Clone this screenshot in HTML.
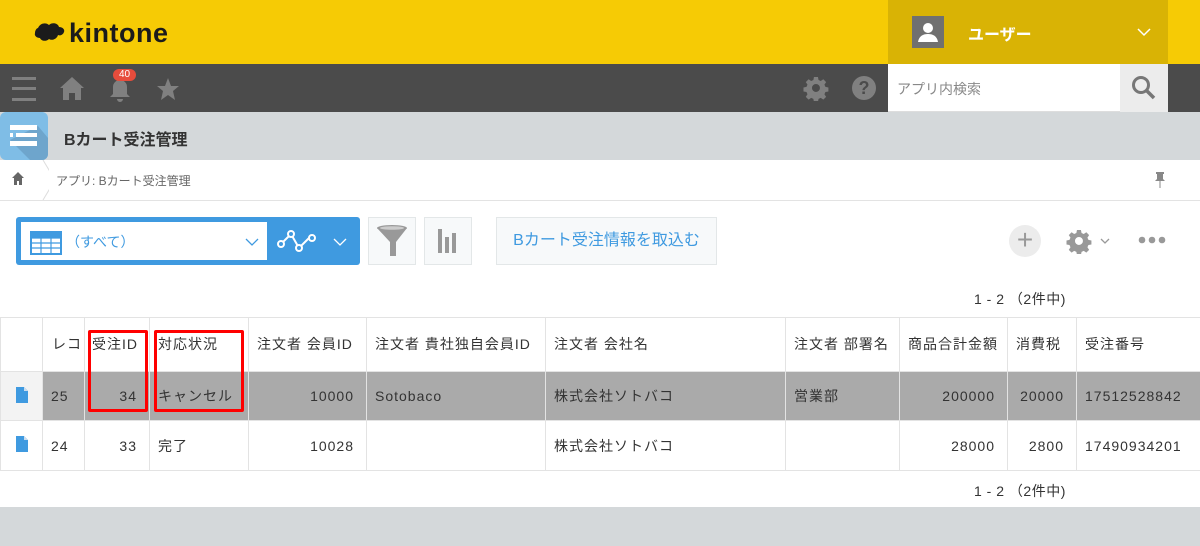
<!DOCTYPE html><html><head><meta charset="utf-8"><style>
*{box-sizing:border-box;margin:0;padding:0}
body{width:1200px;height:546px;overflow:hidden;background:#fff;font-family:"Liberation Sans","Noto Sans CJK JP",sans-serif;color:#333;position:relative}
.a{position:absolute}
td{border:1px solid #e3e3e3;font-size:14px;padding:0 8px;white-space:nowrap;overflow:hidden;letter-spacing:1px}
td.r{text-align:right;padding-right:12px}
</style></head><body>
<div class="a" style="left:0;top:0;width:1200px;height:64px;background:#f6cb05"></div>
<svg class="a" style="left:34px;top:20px" width="32" height="24" viewBox="0 0 32 24"><path d="M4 8c2-5 8-6 11-3 3-3 9-2 10 2 4 0 6 3 5 5-1 3-4 4-6 3-1 4-6 6-9 4-3 3-8 2-9-1-3 0-6-2-5-5 0-3 2-5 3-5z" fill="#1b1b1b"/></svg>
<div class="a" style="left:69px;top:18px;font-size:27px;font-weight:bold;color:#1b1b1b;letter-spacing:0.5px">kintone</div>
<div class="a" style="left:888px;top:0;width:280px;height:64px;background:#d9b305"></div>
<div class="a" style="left:912px;top:16px;width:32px;height:32px;background:#707070"><svg width="32" height="32"><circle cx="16" cy="12" r="5" fill="#fff"/><path d="M6 26c1-6 5-8 10-8s9 2 10 8z" fill="#fff"/></svg></div>
<div class="a" style="left:968px;top:21px;font-size:16px;font-weight:bold;color:#fff">ユーザー</div>
<svg class="a" style="left:1136px;top:27px" width="16" height="10"><path d="M2 2l6 6 6-6" stroke="#fff" stroke-width="1.5" fill="none"/></svg>
<div class="a" style="left:0;top:64px;width:1200px;height:48px;background:#4b4b4b"></div>
<svg class="a" style="left:10px;top:74px" width="180" height="30"><g fill="#808080"><rect x="2" y="3" width="24" height="3"/><rect x="2" y="13" width="24" height="3"/><rect x="2" y="24" width="24" height="3"/><path d="M62 3l12 11h-3v12h-6v-7h-6v7h-6V14h-3z"/><path d="M110 6a7 7 0 0 1 7 7v7l3 3h-20l3-3v-7a7 7 0 0 1 7-7zM107 25h6a3 3 0 0 1-6 0z"/><path d="M158 4l3 8h8l-6 5 2 9-7-5-7 5 2-9-6-5h8z"/></g></svg>
<div class="a" style="left:113px;top:69px;width:23px;height:12px;border-radius:6px;background:#e74c3c;color:#fff;font-size:10px;text-align:center;line-height:12px">40</div>
<svg class="a" style="left:803px;top:75px" width="26" height="26" viewBox="0 0 24 24"><path fill="#808080" d="M10 1h4l.6 3 2.2 1 2.6-1.7 2.8 2.8L20.5 8.7l1 2.2 3 .6v4l-3 .6-1 2.2 1.7 2.6-2.8 2.8-2.6-1.7-2.2 1-.6 3h-4l-.6-3-2.2-1-2.6 1.7-2.8-2.8 1.7-2.6-1-2.2-3-.6v-4l3-.6 1-2.2L1.8 6.1 4.6 3.3 7.2 5l2.2-1zM12 8a4 4 0 1 0 0 8 4 4 0 0 0 0-8z" transform="scale(.92) translate(1 1)"/></svg>
<div class="a" style="left:852px;top:76px;width:24px;height:24px;border-radius:50%;background:#808080;color:#4b4b4b;font-size:18px;font-weight:bold;text-align:center;line-height:24px">?</div>
<div class="a" style="left:888px;top:64px;width:232px;height:48px;background:#fff;border-bottom:1px solid #ddd"></div>
<div class="a" style="left:897px;top:79px;font-size:14px;color:#888">アプリ内検索</div>
<div class="a" style="left:1120px;top:64px;width:48px;height:48px;background:#ececec"><svg width="48" height="48"><circle cx="21" cy="21" r="7.5" stroke="#777" stroke-width="3" fill="none"/><path d="M26 26l8 8" stroke="#777" stroke-width="3.5"/></svg></div>
<div class="a" style="left:0;top:112px;width:1200px;height:48px;background:#d4d8da"></div>
<div class="a" style="left:0;top:112px;width:48px;height:48px;background:#7fbde6;border-radius:6px;overflow:hidden"><svg width="48" height="48"><path d="M10 28L30 48h18V26L38 14z" fill="#6ea5cc"/><g fill="#fff"><rect x="10" y="13" width="27" height="5"/><rect x="10" y="21" width="3" height="4"/><rect x="16" y="21" width="21" height="4"/><rect x="10" y="29" width="27" height="5"/></g></svg></div>
<div class="a" style="left:64px;top:126px;font-size:16px;font-weight:bold;color:#333">Bカート受注管理</div>
<svg class="a" style="left:9px;top:160px" width="40" height="40"><path d="M9 12l6 6h-2v7h-3v-4H8v4H5v-7H3z" fill="#666"/><path d="M34 0l12 20-12 20" stroke="#ddd" fill="none"/></svg>
<div class="a" style="left:56px;top:172px;font-size:12px;color:#666">アプリ: Bカート受注管理</div>
<svg class="a" style="left:1153px;top:171px" width="14" height="18"><path d="M3 1h8v2h-1v5l2 2H2l2-2V3H3zM6.5 10h1v7h-1z" fill="#888"/></svg>
<div class="a" style="left:0;top:200px;width:1200px;height:1px;background:#e3e3e3"></div>
<div class="a" style="left:16px;top:217px;width:344px;height:48px;background:#3f9ae0;border-radius:3px"></div>
<div class="a" style="left:21px;top:222px;width:246px;height:38px;background:#fff"></div>
<svg class="a" style="left:30px;top:231px" width="32" height="24"><rect x="1" y="1" width="30" height="22" fill="none" stroke="#3f9ae0" stroke-width="2"/><g stroke="#3f9ae0" stroke-width="1.2"><path d="M1 7h30M1 12h30M1 17h30M11 7v16M21 7v16"/></g><rect x="1" y="1" width="30" height="6" fill="#3f9ae0"/></svg>
<div class="a" style="left:66px;top:232px;font-size:14px;color:#3f9ae0">（すべて）</div>
<svg class="a" style="left:244px;top:236px" width="16" height="12"><path d="M2 3l6 6 6-6" stroke="#3f9ae0" stroke-width="1.3" fill="none"/></svg>
<svg class="a" style="left:276px;top:227px" width="44" height="28"><path d="M5 17l10-10 8 14 10-10" stroke="#fff" stroke-width="2" fill="none"/><g fill="#3f9ae0" stroke="#fff" stroke-width="2"><circle cx="5" cy="17" r="3"/><circle cx="15" cy="7" r="3"/><circle cx="23" cy="21" r="3"/><circle cx="36" cy="11" r="3"/></g></svg>
<svg class="a" style="left:332px;top:236px" width="16" height="12"><path d="M2 3l6 6 6-6" stroke="#fff" stroke-width="1.3" fill="none"/></svg>
<div class="a" style="left:368px;top:217px;width:48px;height:48px;background:#f7f9fa;border:1px solid #e3e7e8"><svg width="46" height="46"><ellipse cx="23" cy="10" rx="15" ry="3" fill="#999"/><path d="M8 10h30l-11 14v14h-6V24z" fill="#999"/><ellipse cx="23" cy="10" rx="12" ry="1.8" fill="#ccc"/></svg></div>
<div class="a" style="left:424px;top:217px;width:48px;height:48px;background:#f7f9fa;border:1px solid #e3e7e8"><svg width="46" height="46"><g fill="#999"><rect x="13" y="11" width="4" height="24"/><rect x="20" y="19" width="4" height="16"/><rect x="27" y="15" width="4" height="20"/></g></svg></div>
<div class="a" style="left:496px;top:217px;width:221px;height:48px;background:#f7f9fa;border:1px solid #e3e7e8;color:#3f9ae0;font-size:16px;text-align:center;line-height:46px">Bカート受注情報を取込む</div>
<div class="a" style="left:1009px;top:225px;width:32px;height:32px;border-radius:50%;background:#ececec;color:#999;font-size:28px;text-align:center;line-height:30px;font-weight:300">+</div>
<svg class="a" style="left:1066px;top:228px" width="26" height="26" viewBox="0 0 24 24"><path fill="#999" d="M10 1h4l.6 3 2.2 1 2.6-1.7 2.8 2.8L20.5 8.7l1 2.2 3 .6v4l-3 .6-1 2.2 1.7 2.6-2.8 2.8-2.6-1.7-2.2 1-.6 3h-4l-.6-3-2.2-1-2.6 1.7-2.8-2.8 1.7-2.6-1-2.2-3-.6v-4l3-.6 1-2.2L1.8 6.1 4.6 3.3 7.2 5l2.2-1zM12 8a4 4 0 1 0 0 8 4 4 0 0 0 0-8z" transform="scale(.92) translate(1 1)"/></svg>
<svg class="a" style="left:1100px;top:237px" width="10" height="8"><path d="M1 2l4 4 4-4" stroke="#999" stroke-width="1.3" fill="none"/></svg>
<svg class="a" style="left:1138px;top:235px" width="30" height="10"><g fill="#999"><circle cx="4" cy="5" r="3.3"/><circle cx="14" cy="5" r="3.3"/><circle cx="24" cy="5" r="3.3"/></g></svg>
<div class="a" style="left:974px;top:289px;font-size:14px;color:#333;letter-spacing:0.5px">1 - 2 （2件中)</div>
<table class="a" style="left:0;top:317px;width:1200px;border-collapse:collapse;table-layout:fixed">
<colgroup><col style="width:42px"><col style="width:42px"><col style="width:65px"><col style="width:99px"><col style="width:118px"><col style="width:179px"><col style="width:240px"><col style="width:114px"><col style="width:108px"><col style="width:69px"><col style="width:124px"></colgroup>
<tr style="height:54px;vertical-align:top"><td></td><td style="padding:16px 0 0 9px">レコ‧</td><td style="padding:16px 0 0 7px">受注ID</td><td style="padding-top:16px">対応状況</td><td style="padding-top:16px">注文者 会員ID</td><td style="padding-top:16px">注文者 貴社独自会員ID</td><td style="padding-top:16px">注文者 会社名</td><td style="padding-top:16px">注文者 部署名</td><td style="padding-top:16px">商品合計金額</td><td style="padding-top:16px">消費税</td><td style="padding-top:16px">受注番号</td></tr>
<tr style="height:49px;background:#aaa"><td style="background:#f3f3f3;text-align:center"><svg width="12" height="16"><path d="M0 0h8l4 4v12H0z" fill="#3f9ae0"/><path d="M8 0v4h4" fill="#cde"/></svg></td><td>25</td><td class="r">34</td><td>キャンセル</td><td class="r">10000</td><td>Sotobaco</td><td>株式会社ソトバコ</td><td>営業部</td><td class="r">200000</td><td class="r">20000</td><td>17512528842</td></tr>
<tr style="height:50px"><td style="text-align:center"><svg width="12" height="16"><path d="M0 0h8l4 4v12H0z" fill="#3f9ae0"/><path d="M8 0v4h4" fill="#cde"/></svg></td><td>24</td><td class="r">33</td><td>完了</td><td class="r">10028</td><td></td><td>株式会社ソトバコ</td><td></td><td class="r">28000</td><td class="r">2800</td><td>17490934201</td></tr>
</table>
<div class="a" style="left:88px;top:330px;width:60px;height:82px;border:3px solid #f00;border-radius:2px"></div>
<div class="a" style="left:154px;top:330px;width:90px;height:82px;border:3px solid #f00;border-radius:2px"></div>
<div class="a" style="left:974px;top:481px;font-size:14px;color:#333;letter-spacing:0.5px">1 - 2 （2件中)</div>
<div class="a" style="left:0;top:507px;width:1200px;height:39px;background:#d4d8da"></div>
</body></html>
